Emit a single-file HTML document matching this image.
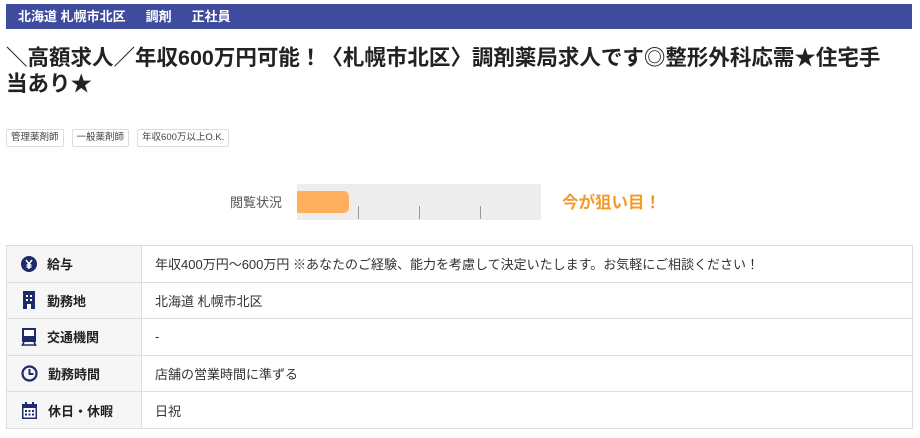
<!DOCTYPE html>
<html><head><meta charset="utf-8"><style>
body{margin:0;background:#fff;font-family:"Liberation Sans","Noto Sans CJK JP",sans-serif;color:#333;width:920px;height:438px;overflow:hidden;position:relative}
.hd{position:absolute;left:6px;top:4px;width:906px;height:25px;background:#3f4b9c;color:#fff;font-size:13px;font-weight:bold;line-height:25px}
.hd span{margin-left:12px;margin-right:8px}
h1{position:absolute;left:6px;top:45px;margin:0;font-size:21.5px;line-height:26px;font-weight:bold;color:#222;width:895px}
.tags{position:absolute;left:6px;top:129px;display:flex;gap:8px}
.tag{border:1px solid #ddd;border-radius:2px;font-size:9.5px;padding:0 4px;height:16px;line-height:16px;color:#444}
.lbl{position:absolute;left:230px;top:192px;font-size:13px;color:#555}
.bar{position:absolute;left:297px;top:184px;width:244px;height:36px;background:#eeeded}
.fill{position:absolute;left:0;top:7px;width:52px;height:22px;background:#ffb05e;border-radius:0 5px 5px 0}
.tk{position:absolute;top:22px;width:1px;height:13px;background:#999}
.now{position:absolute;left:562px;top:189px;font-size:16.5px;font-weight:bold;color:#f59a26}
table{position:absolute;left:6px;top:245px;width:907px;border-collapse:collapse;font-size:13px}
td{border:1px solid #ddd;height:35.6px;padding:0}
td.k{width:134px;background:#f6f6f6;font-weight:bold;color:#222}
td.k div{display:flex;align-items:center}
td.k svg{margin:0 10px 0 14px}
td.v{padding-left:13px;color:#333}
</style></head><body>
<div class="hd"><span>北海道 札幌市北区</span><span>調剤</span><span>正社員</span></div>
<h1>＼高額求人／年収600万円可能！〈札幌市北区〉調剤薬局求人です◎整形外科応需★住宅手当あり★</h1>
<div class="tags"><div class="tag">管理薬剤師</div><div class="tag">一般薬剤師</div><div class="tag">年収600万以上O.K.</div></div>
<div class="lbl">閲覧状況</div>
<div class="bar"><div class="fill"></div><div class="tk" style="left:61px"></div><div class="tk" style="left:122px"></div><div class="tk" style="left:183px"></div></div>
<div class="now">今が狙い目！</div>
<table>
<tr><td class="k"><div><svg width="16" height="16" viewBox="0 0 16 16"><circle cx="8" cy="8" r="8" fill="#1d2a6b"/><path d="M5 4l3 4 3-4M8 8v5M5.5 9h5M5.5 11h5" stroke="#fff" stroke-width="1.5" fill="none"/></svg>給与</div></td><td class="v">年収400万円～600万円 ※あなたのご経験、能力を考慮して決定いたします。お気軽にご相談ください！</td></tr>
<tr><td class="k"><div><svg width="16" height="18" viewBox="0 0 16 18"><rect x="2" y="0" width="12" height="18" fill="#1d2a6b"/><g fill="#fff"><rect x="5" y="4" width="2" height="2"/><rect x="9" y="4" width="2" height="2"/><rect x="5" y="8" width="2" height="2"/><rect x="9" y="8" width="2" height="2"/><rect x="6" y="13" width="4" height="5"/></g></svg>勤務地</div></td><td class="v">北海道 札幌市北区</td></tr>
<tr><td class="k"><div><svg width="16" height="18" viewBox="0 0 16 18"><rect x="1" y="0" width="14" height="14" fill="#1d2a6b"/><rect x="3" y="2" width="10" height="6" fill="#fff"/><path d="M3 14l-2 4M13 14l2 4M2 17h12" stroke="#1d2a6b" stroke-width="1.5"/></svg>交通機関</div></td><td class="v">-</td></tr>
<tr><td class="k"><div><svg width="17" height="17" viewBox="0 0 17 17"><circle cx="8.5" cy="8.5" r="7" stroke="#1d2a6b" stroke-width="2.2" fill="none"/><path d="M8.5 4v5h4" stroke="#1d2a6b" stroke-width="2" fill="none"/></svg>勤務時間</div></td><td class="v">店舗の営業時間に準ずる</td></tr>
<tr><td class="k"><div><svg width="17" height="17" viewBox="0 0 17 17"><rect x="1" y="2" width="15" height="15" fill="#1d2a6b"/><rect x="2.5" y="6" width="12" height="9.5" fill="#fff"/><g fill="#1d2a6b"><rect x="4" y="8" width="2" height="2"/><rect x="7.5" y="8" width="2" height="2"/><rect x="11" y="8" width="2" height="2"/><rect x="4" y="11.5" width="2" height="2"/><rect x="7.5" y="11.5" width="2" height="2"/><rect x="11" y="11.5" width="2" height="2"/></g><rect x="4" y="0" width="2" height="4" fill="#1d2a6b"/><rect x="11" y="0" width="2" height="4" fill="#1d2a6b"/></svg>休日・休暇</div></td><td class="v">日祝</td></tr>
</table>
</body></html>
